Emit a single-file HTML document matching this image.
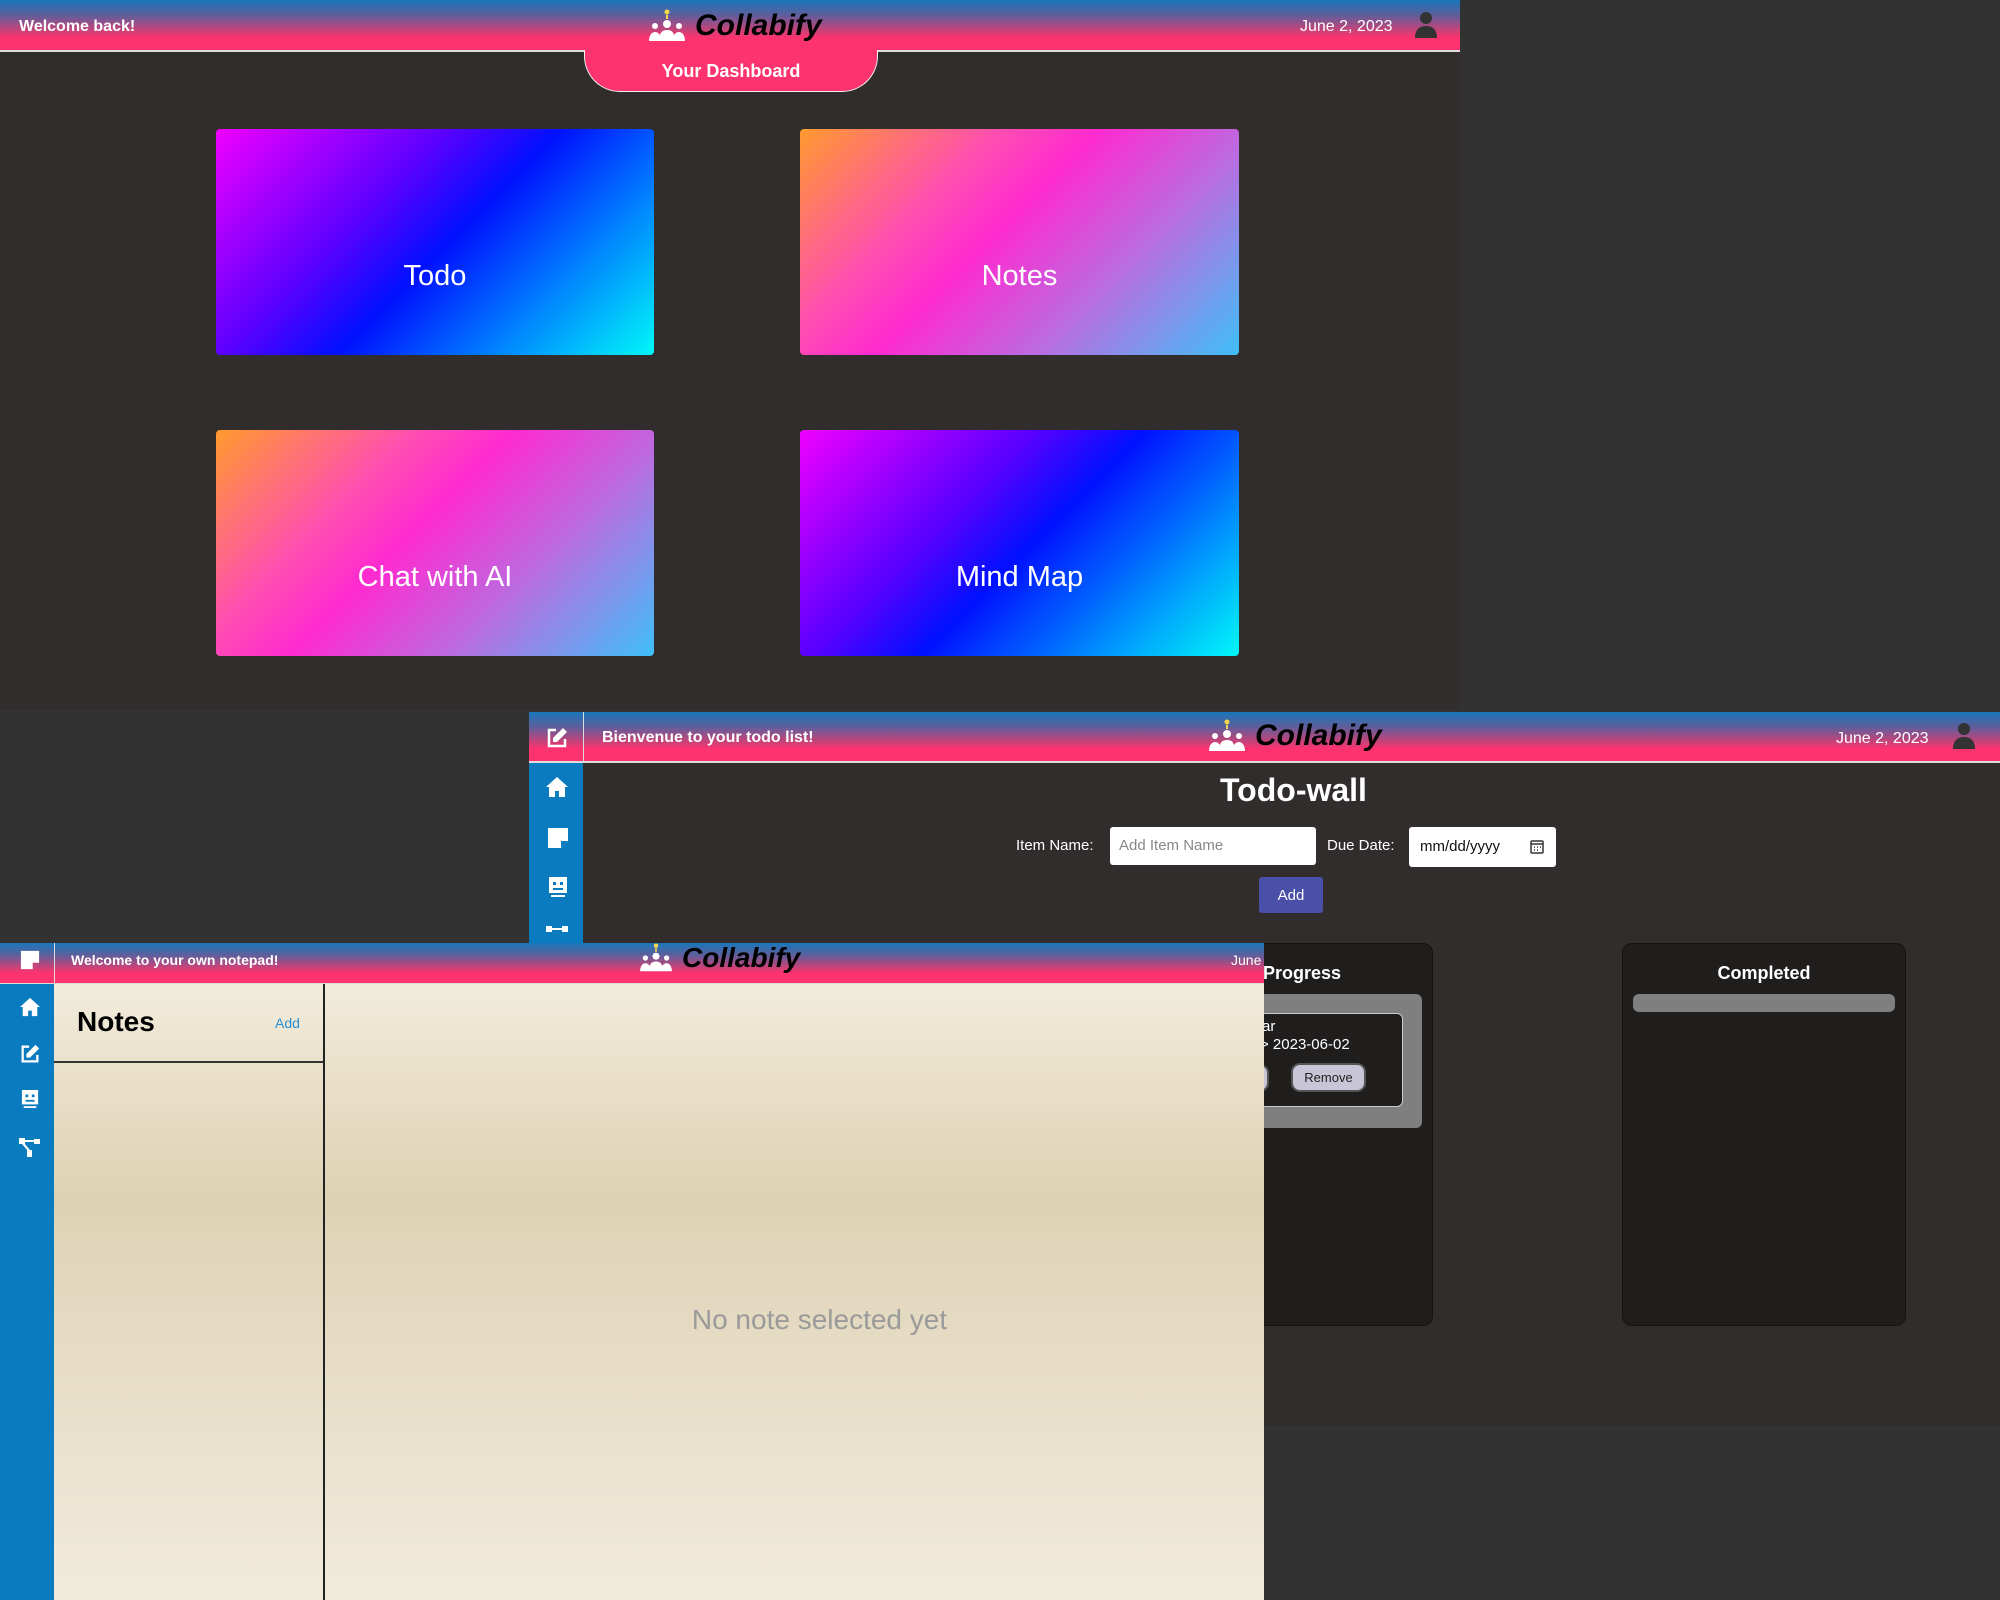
<!DOCTYPE html>
<html><head><meta charset="utf-8"><style>
*{margin:0;padding:0;box-sizing:border-box}
body{width:2000px;height:1600px;background:#333232;position:relative;overflow:hidden;font-family:"Liberation Sans",Arial,sans-serif;color:#fff}
.abs{position:absolute}
.hdr{position:absolute;background:linear-gradient(180deg,#1877ba 0%,#5d5f9c 30%,#c64379 60%,#fc336e 75%,#fc336e 100%);border-bottom:2px solid #ddd}
.logo{position:absolute;display:flex;align-items:center;gap:8px;color:#000;font-weight:bold;font-style:italic;font-size:30px}
.card{position:absolute;border-radius:4px;display:flex;align-items:flex-end;justify-content:center;padding-bottom:62px;font-size:29px;color:#fff}
.g1{background:linear-gradient(135deg,#f000ff 0%,#5a00ff 35%,#0010ff 52%,#0080ff 75%,#00f8f8 100%)}
.g2{background:linear-gradient(135deg,#ff9a2e 0%,#ff4fb0 30%,#ff2ad0 45%,#b86ee0 70%,#3fbff8 100%)}
.side{position:absolute;background:#0a7bbf}
.col{position:absolute;background:#201d1d;border-radius:10px;border:1px solid #151212}
</style></head><body>

<div class="abs" style="left:0;top:0;width:1460px;height:710px;background:#322d2d"></div>
<div class="hdr" style="left:0;top:0;width:1460px;height:52px"></div>
<div class="abs" style="left:19px;top:18px;font-size:16px;font-weight:bold">Welcome back!</div>
<div class="logo" style="left:647px;top:9px">
<svg width="40" height="34" viewBox="0 0 40 34"><circle cx="20" cy="3" r="2.5" fill="#f4d64a"/><rect x="19" y="6" width="2" height="4" fill="#f4d64a"/><circle cx="20" cy="15" r="4" fill="#fff"/><circle cx="8" cy="17" r="3" fill="#fff"/><circle cx="32" cy="17" r="3" fill="#fff"/><path d="M2 32c0-6 3-9 6-9s4 2 5 3c1-4 4-5 7-5s6 1 7 5c1-1 2-3 5-3s6 3 6 9z" fill="#fff"/></svg>
<span>Collabify</span></div>
<div class="abs" style="left:1300px;top:18px;font-size:16px">June 2, 2023</div>
<svg class="abs" style="left:1414px;top:11px" width="24" height="27" viewBox="0 0 24 27"><circle cx="12" cy="7" r="6" fill="#333"/><path d="M1 27c0-9 5-12 11-12s11 3 11 12z" fill="#333"/></svg>
<div class="abs" style="left:584px;top:50px;width:294px;height:42px;background:#fc336e;border-radius:0 0 36px 36px;border:1px solid #eee;border-top:none;text-align:center;font-weight:bold;font-size:18px;padding-top:11px">Your Dashboard</div>
<div class="card g1" style="left:216px;top:129px;width:438px;height:226px">Todo</div>
<div class="card g2" style="left:800px;top:129px;width:439px;height:226px">Notes</div>
<div class="card g2" style="left:216px;top:430px;width:438px;height:226px">Chat with AI</div>
<div class="card g1" style="left:800px;top:430px;width:439px;height:226px">Mind Map</div>

<div class="abs" style="left:529px;top:712px;width:1471px;height:714px;background:#322d2d"></div>
<div class="hdr" style="left:529px;top:712px;width:1471px;height:51px"></div>
<div class="side" style="left:529px;top:763px;width:54px;height:200px"></div>
<div class="abs" style="left:583px;top:712px;width:1px;height:51px;background:#ddd"></div>
<svg class="abs" style="left:545px;top:726px" width="24" height="24" viewBox="0 0 24 24" fill="none" stroke="#fff" stroke-width="2.5"><path d="M11 4H4v16h16v-7"/><path d="M18 2l4 4-10 10H8v-4z" fill="#fff" stroke="none"/></svg>
<div class="abs" style="left:602px;top:729px;font-size:16px;font-weight:bold">Bienvenue to your todo list!</div>
<div class="logo" style="left:1207px;top:719px">
<svg width="40" height="34" viewBox="0 0 40 34"><circle cx="20" cy="3" r="2.5" fill="#f4d64a"/><rect x="19" y="6" width="2" height="4" fill="#f4d64a"/><circle cx="20" cy="15" r="4" fill="#fff"/><circle cx="8" cy="17" r="3" fill="#fff"/><circle cx="32" cy="17" r="3" fill="#fff"/><path d="M2 32c0-6 3-9 6-9s4 2 5 3c1-4 4-5 7-5s6 1 7 5c1-1 2-3 5-3s6 3 6 9z" fill="#fff"/></svg>
<span>Collabify</span></div>
<div class="abs" style="left:1836px;top:730px;font-size:16px">June 2, 2023</div>
<svg class="abs" style="left:1952px;top:722px" width="24" height="27" viewBox="0 0 24 27"><circle cx="12" cy="7" r="6" fill="#333"/><path d="M1 27c0-9 5-12 11-12s11 3 11 12z" fill="#333"/></svg>
<svg class="abs" style="left:545px;top:776px" width="24" height="22" viewBox="0 0 24 22" fill="#fff"><path d="M12 1L1 11h3v10h6v-6h4v6h6V11h3z"/></svg>
<svg class="abs" style="left:547px;top:827px" width="22" height="22" viewBox="0 0 22 22" fill="#fff"><path d="M1 1h20v13l-7 7H1z"/><path d="M14 21v-7h7" fill="#0a7bbf"/></svg>
<svg class="abs" style="left:548px;top:876px" width="20" height="22" viewBox="0 0 20 22" fill="#fff"><rect x="1" y="1" width="18" height="16"/><rect x="5" y="6" width="3" height="3" fill="#0a7bbf"/><rect x="12" y="6" width="3" height="3" fill="#0a7bbf"/><rect x="5" y="12" width="10" height="2" fill="#0a7bbf"/><rect x="3" y="19" width="14" height="2"/></svg>
<svg class="abs" style="left:546px;top:926px" width="24" height="14" viewBox="0 0 24 14" fill="#fff"><rect x="0" y="0" width="6" height="6"/><rect x="16" y="0" width="6" height="6"/><rect x="6" y="2" width="10" height="2"/></svg>
<div class="abs" style="left:1220px;top:772px;font-size:32px;font-weight:bold">Todo-wall</div>
<div class="abs" style="left:1016px;top:837px;font-size:15px">Item Name:</div>
<div class="abs" style="left:1110px;top:827px;width:206px;height:38px;background:#fff;border-radius:3px;color:#888;font-size:15px;padding:10px 9px">Add Item Name</div>
<div class="abs" style="left:1327px;top:837px;font-size:15px">Due Date:</div>
<div class="abs" style="left:1409px;top:827px;width:147px;height:40px;background:#fff;border-radius:3px;color:#111;font-size:15px;padding:11px 11px">mm/dd/yyyy</div>
<svg class="abs" style="left:1530px;top:839px" width="14" height="15" viewBox="0 0 14 15" fill="none" stroke="#333" stroke-width="1.5"><rect x="1" y="2" width="12" height="12" rx="1"/><path d="M1 5h12M4 8h1M7 8h1M10 8h1M4 11h1M7 11h1"/></svg>
<div class="abs" style="left:1259px;top:877px;width:64px;height:36px;background:#4a4fa8;border-radius:3px;text-align:center;font-size:15px;padding-top:10px">Add</div>

<div class="col" style="left:1150px;top:943px;width:283px;height:383px"></div>
<div class="abs" style="left:1263px;top:963px;font-size:18px;font-weight:bold">Progress</div>
<div class="abs" style="left:1170px;top:994px;width:252px;height:134px;background:#7f7f7f;border-radius:6px"></div>
<div class="abs" style="left:1190px;top:1013px;width:213px;height:94px;background:#201d1d;border:1px solid #ccc;border-radius:6px"></div>
<div class="abs" style="left:1262px;top:1018px;font-size:15px">ar</div>
<div class="abs" style="left:1260px;top:1036px;font-size:15px">&gt; 2023-06-02</div>
<div class="abs" style="left:1230px;top:1064px;width:39px;height:28px;background:#c8c6d6;border-radius:9px;border:2px solid #555"></div>
<div class="abs" style="left:1291px;top:1063px;width:75px;height:29px;background:#c8c6d6;border-radius:9px;border:2px solid #555;color:#222;font-size:13px;text-align:center;padding-top:5px">Remove</div>

<div class="col" style="left:1622px;top:943px;width:284px;height:383px"></div>
<div class="abs" style="left:1622px;top:963px;width:284px;text-align:center;font-size:18px;font-weight:bold">Completed</div>
<div class="abs" style="left:1633px;top:994px;width:262px;height:18px;background:#7f7f7f;border-radius:6px"></div>

<div class="abs" style="left:0;top:983px;width:1264px;height:617px;background:linear-gradient(180deg,#f2ecdc 0%,#e7dcc4 20%,#ded2b5 35%,#e6dcc5 60%,#f1ebdc 100%)"></div>
<div class="hdr" style="left:0;top:943px;width:1264px;height:41px;border-bottom:1px solid #ddd"></div>
<div class="side" style="left:0;top:984px;width:54px;height:616px"></div>
<div class="abs" style="left:54px;top:943px;width:1px;height:41px;background:#ddd"></div>
<svg class="abs" style="left:20px;top:950px" width="20" height="20" viewBox="0 0 22 22" fill="#fff"><path d="M1 1h20v13l-7 7H1z"/><path d="M14 21v-7h7" fill="#c64379"/></svg>
<div class="abs" style="left:71px;top:952px;font-size:14px;font-weight:bold">Welcome to your own notepad!</div>
<div class="logo" style="left:638px;top:942px;font-size:28px">
<svg width="36" height="30" viewBox="0 0 40 34"><circle cx="20" cy="3" r="2.5" fill="#f4d64a"/><rect x="19" y="6" width="2" height="4" fill="#f4d64a"/><circle cx="20" cy="15" r="4" fill="#fff"/><circle cx="8" cy="17" r="3" fill="#fff"/><circle cx="32" cy="17" r="3" fill="#fff"/><path d="M2 32c0-6 3-9 6-9s4 2 5 3c1-4 4-5 7-5s6 1 7 5c1-1 2-3 5-3s6 3 6 9z" fill="#fff"/></svg>
<span>Collabify</span></div>
<div class="abs" style="left:1231px;top:952px;font-size:14px">June</div>
<svg class="abs" style="left:19px;top:997px" width="22" height="20" viewBox="0 0 24 22" fill="#fff"><path d="M12 1L1 11h3v10h6v-6h4v6h6V11h3z"/></svg>
<svg class="abs" style="left:19px;top:1043px" width="22" height="22" viewBox="0 0 24 24" fill="none" stroke="#fff" stroke-width="2.5"><path d="M11 4H4v16h16v-7"/><path d="M18 2l4 4-10 10H8v-4z" fill="#fff" stroke="none"/></svg>
<svg class="abs" style="left:21px;top:1089px" width="18" height="20" viewBox="0 0 20 22" fill="#fff"><rect x="1" y="1" width="18" height="16"/><rect x="5" y="6" width="3" height="3" fill="#0a7bbf"/><rect x="12" y="6" width="3" height="3" fill="#0a7bbf"/><rect x="5" y="12" width="10" height="2" fill="#0a7bbf"/><rect x="3" y="19" width="14" height="2"/></svg>
<svg class="abs" style="left:19px;top:1138px" width="22" height="20" viewBox="0 0 22 20" fill="#fff"><rect x="0" y="0" width="6" height="6"/><rect x="15" y="1" width="6" height="5"/><rect x="6" y="2" width="9" height="2"/><rect x="8" y="12" width="5" height="7"/><path d="M3 6l6 7 2-1-6-7z"/></svg>
<div class="abs" style="left:323px;top:984px;width:2px;height:616px;background:#222"></div>
<div class="abs" style="left:54px;top:1061px;width:269px;height:2px;background:#333"></div>
<div class="abs" style="left:77px;top:1006px;font-size:28px;font-weight:bold;color:#000">Notes</div>
<div class="abs" style="left:275px;top:1015px;font-size:14px;color:#2a8fd0">Add</div>
<div class="abs" style="left:350px;top:1304px;width:939px;text-align:center;font-size:28px;color:#9a9a9a">No note selected yet</div>
</body></html>
